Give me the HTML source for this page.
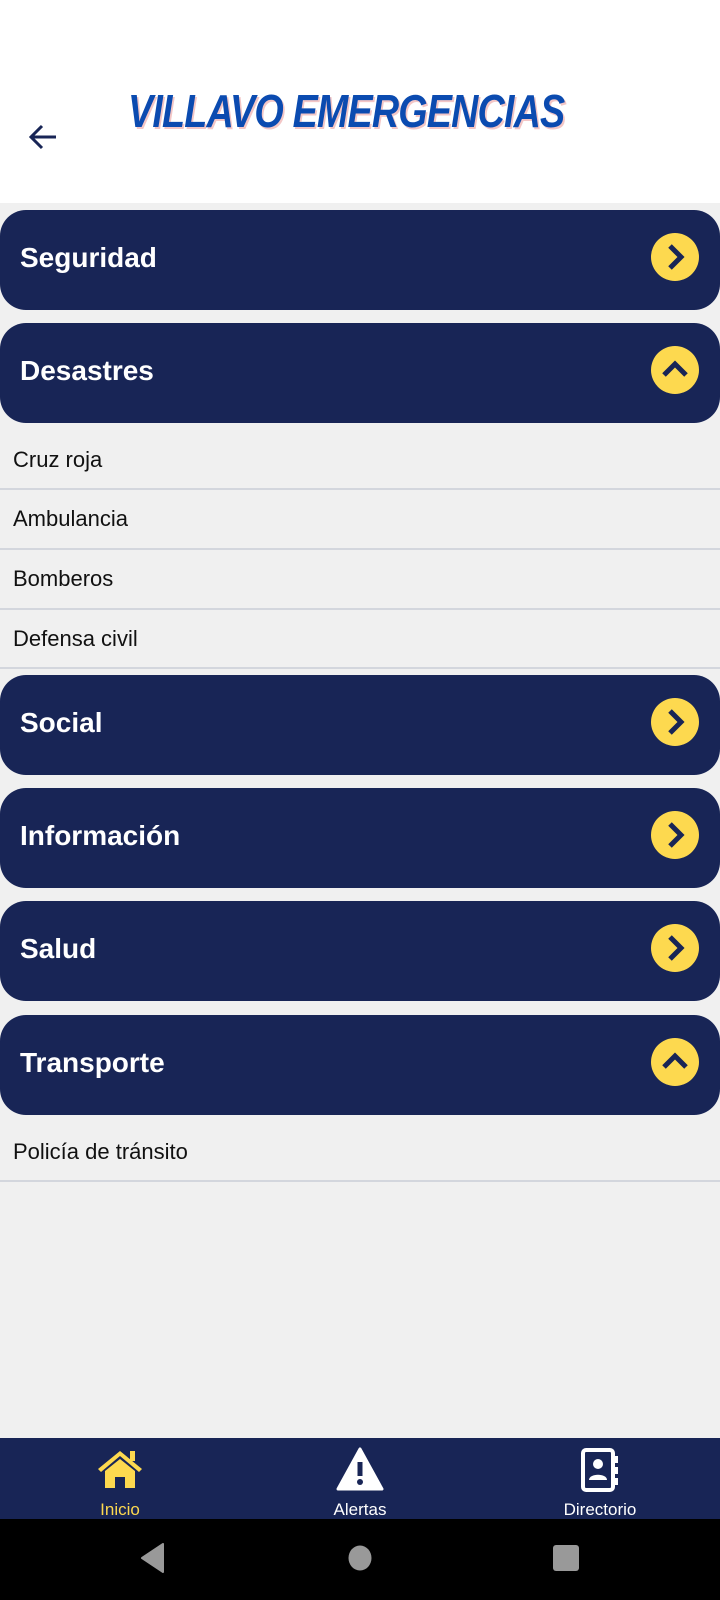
<!DOCTYPE html>
<html><head><meta charset="utf-8"><style>
*{margin:0;padding:0;box-sizing:border-box}
body{width:720px;height:1600px;background:#f0f0f0;font-family:"Liberation Sans",Roboto,sans-serif;position:relative;overflow:hidden}
.hdr{position:absolute;left:0;top:0;width:720px;height:203px;background:#fff}
.title{position:absolute;left:128px;top:84px;font-size:46px;font-weight:900;font-style:italic;color:#0b4bb0;letter-spacing:-1px;transform:scaleX(0.82);transform-origin:left;text-shadow:2px 2px 0 #f3c6c6;font-family:"Liberation Sans",sans-serif}
.card{position:absolute;left:0;width:720px;height:100px;background:#182556;border-radius:26px}
.card span{position:absolute;left:20px;top:32px;color:#fff;font-size:28px;font-weight:bold}
.card svg{position:absolute;left:651px;top:23px}
.item{position:absolute;left:0;width:720px;height:30px;font-size:22px;color:#111;padding-left:13px}
.div{position:absolute;left:0;width:720px;height:2px;background:#d3d6dd}
.nav{position:absolute;left:0;top:1438px;width:720px;height:82px;background:#182556}
.nav div{position:absolute;top:62px;font-size:17px;color:#fff;width:160px;text-align:center}
.sys{position:absolute;left:0;top:1519px;width:720px;height:81px;background:#000}
</style></head><body>
<div class="hdr">
<div class="title">VILLAVO EMERGENCIAS</div>
<svg style="position:absolute;left:28px;top:123px" width="32" height="28" viewBox="0 0 32 28"><path d="M28 14H4M14 3L3 14l11 11" fill="none" stroke="#182556" stroke-width="3"/></svg>
</div>

<div class="card" style="top:210px"><span>Seguridad</span><svg width="48" height="48"><circle cx="24" cy="24" r="24" fill="#fdd94f"/><path d="M19 13l11 11-11 11" fill="none" stroke="#182556" stroke-width="5"/></svg></div>
<div class="card" style="top:323px"><span>Desastres</span><svg width="48" height="48"><circle cx="24" cy="24" r="24" fill="#fdd94f"/><path d="M13 29l11-11 11 11" fill="none" stroke="#182556" stroke-width="5"/></svg></div>
<div class="item" style="top:447px">Cruz roja</div><div class="div" style="top:488px"></div>
<div class="item" style="top:506px">Ambulancia</div><div class="div" style="top:548px"></div>
<div class="item" style="top:566px">Bomberos</div><div class="div" style="top:608px"></div>
<div class="item" style="top:626px">Defensa civil</div><div class="div" style="top:667px"></div>
<div class="card" style="top:675px"><span>Social</span><svg width="48" height="48"><circle cx="24" cy="24" r="24" fill="#fdd94f"/><path d="M19 13l11 11-11 11" fill="none" stroke="#182556" stroke-width="5"/></svg></div>
<div class="card" style="top:788px"><span>Información</span><svg width="48" height="48"><circle cx="24" cy="24" r="24" fill="#fdd94f"/><path d="M19 13l11 11-11 11" fill="none" stroke="#182556" stroke-width="5"/></svg></div>
<div class="card" style="top:901px"><span>Salud</span><svg width="48" height="48"><circle cx="24" cy="24" r="24" fill="#fdd94f"/><path d="M19 13l11 11-11 11" fill="none" stroke="#182556" stroke-width="5"/></svg></div>
<div class="card" style="top:1015px"><span>Transporte</span><svg width="48" height="48"><circle cx="24" cy="24" r="24" fill="#fdd94f"/><path d="M13 29l11-11 11 11" fill="none" stroke="#182556" stroke-width="5"/></svg></div>
<div class="item" style="top:1139px">Policía de tránsito</div><div class="div" style="top:1180px"></div>

<div class="nav">
<svg style="position:absolute;left:96px;top:10px" width="48" height="42" viewBox="0 0 48 42"><path d="M2 21L24 3l22 18-3 3L24 8 5 24z" fill="#fdd94f"/><rect x="34" y="3" width="5" height="10" fill="#fdd94f"/><path d="M9 23L24 11l15 12v17H29V29H19v11H9z" fill="#fdd94f"/></svg>
<div style="left:40px;color:#fdd94f">Inicio</div>
<svg style="position:absolute;left:336px;top:9px" width="48" height="44" viewBox="0 0 48 44"><path d="M24 2L46 42H2z" fill="#fff" stroke="#fff" stroke-width="3" stroke-linejoin="round"/><rect x="21.5" y="15" width="5" height="14" fill="#182556"/><circle cx="24" cy="35" r="3" fill="#182556"/></svg>
<div style="left:280px">Alertas</div>
<svg style="position:absolute;left:580px;top:10px" width="40" height="44" viewBox="0 0 40 44"><rect x="3" y="2" width="30" height="40" rx="3" fill="none" stroke="#fff" stroke-width="4"/><rect x="34" y="8" width="4" height="7" fill="#fff"/><rect x="34" y="19" width="4" height="7" fill="#fff"/><rect x="34" y="30" width="4" height="7" fill="#fff"/><circle cx="18" cy="16" r="5" fill="#fff"/><path d="M9 32c0-7 18-7 18 0z" fill="#fff"/></svg>
<div style="left:520px">Directorio</div>
</div>
<div class="sys">
<svg style="position:absolute;left:139px;top:24px" width="26" height="30"><path d="M24 1v28L3 15z" fill="#999" stroke="#999" stroke-linejoin="round" stroke-width="2"/></svg>
<svg style="position:absolute;left:348px;top:26px" width="24" height="26"><ellipse cx="12" cy="13" rx="11.5" ry="12.5" fill="#999"/></svg>
<svg style="position:absolute;left:553px;top:26px" width="26" height="26"><rect width="26" height="26" rx="3" fill="#999"/></svg>
</div>
</body></html>
